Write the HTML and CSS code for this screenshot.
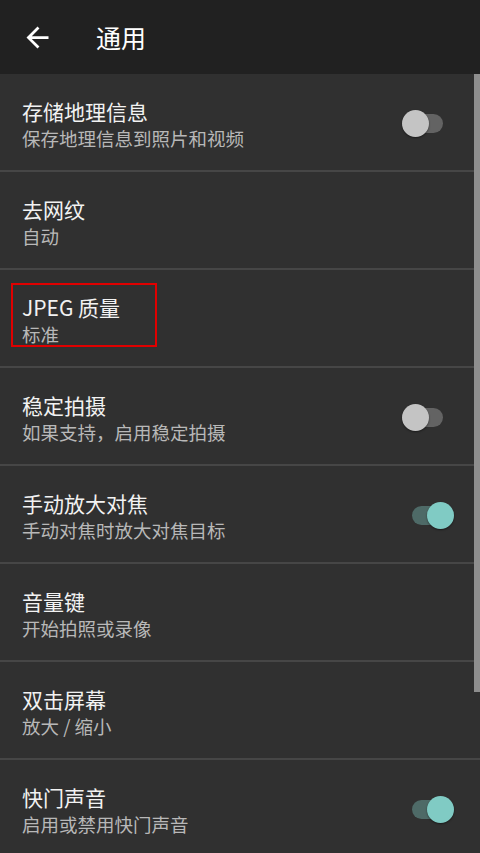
FILE: index.html
```html
<!DOCTYPE html>
<html lang="zh-CN">
<head>
<meta charset="utf-8">
<title>通用</title>
<link rel="stylesheet" href="styles.css">
</head>
<body>
<div class="screen">
  <header class="appbar">
    <svg class="back" viewBox="0 0 24 24" width="33" height="33"><path d="M20 11H7.83l5.59-5.59L12 4l-8 8 8 8 1.41-1.41L7.83 13H20v-2z" fill="#ffffff"/></svg>
    <h1 class="appbar-title">通用</h1>
  </header>
  <main class="list">
    <div class="row">
      <div class="text"><div class="title">存储地理信息</div><div class="summary">保存地理信息到照片和视频</div></div>
      <div class="switch off"><span class="track"></span><span class="thumb"></span></div>
    </div>
    <div class="row">
      <div class="text"><div class="title">去网纹</div><div class="summary">自动</div></div>
    </div>
    <div class="row">
      <div class="text"><div class="title">JPEG 质量</div><div class="summary">标准</div></div>
      <span class="highlight"></span>
    </div>
    <div class="row">
      <div class="text"><div class="title">稳定拍摄</div><div class="summary">如果支持，启用稳定拍摄</div></div>
      <div class="switch off"><span class="track"></span><span class="thumb"></span></div>
    </div>
    <div class="row">
      <div class="text"><div class="title">手动放大对焦</div><div class="summary">手动对焦时放大对焦目标</div></div>
      <div class="switch on"><span class="track"></span><span class="thumb"></span></div>
    </div>
    <div class="row">
      <div class="text"><div class="title">音量键</div><div class="summary">开始拍照或录像</div></div>
    </div>
    <div class="row">
      <div class="text"><div class="title">双击屏幕</div><div class="summary">放大 / 缩小</div></div>
    </div>
    <div class="row">
      <div class="text"><div class="title">快门声音</div><div class="summary">启用或禁用快门声音</div></div>
      <div class="switch on"><span class="track"></span><span class="thumb"></span></div>
    </div>
    <span class="scrollbar"></span>
  </main>
</div>
</body>
</html>
```
FILE: styles.css
```css
html, body {
  margin: 0;
  padding: 0;
  background: #303030;
}
body {
  font-family: "Noto Sans CJK SC", "Noto Sans", Roboto, sans-serif;
  color: #ffffff;
}
.screen {
  width: 480px;
  height: 853px;
  overflow: hidden;
  display: flex;
  flex-direction: column;
}
.appbar {
  height: 74px;
  flex: none;
  background: #212121;
  display: flex;
  align-items: center;
  padding-left: 21px;
}
.back {
  display: block;
  margin-top: 1px;
}
.appbar-title {
  margin: 0 0 0 42px;
  font-size: 25px;
  font-weight: 400;
  line-height: 30px;
  color: #ffffff;
}
.list {
  position: relative;
  flex: 1;
}
.row {
  position: relative;
  height: 96px;
  border-bottom: 2px solid #464646;
  display: flex;
  align-items: flex-start;
  padding: 24px 26px 0 22px;
  box-sizing: content-box;
}
.row { height: 72px; }
.text {
  flex: 1;
}
.title {
  font-size: 21px;
  line-height: 27px;
  color: #f2f2f2;
}
.summary {
  font-size: 18.5px;
  line-height: 27px;
  color: #b8b8b8;
}
.switch {
  position: relative;
  width: 52px;
  height: 27px;
  margin-top: 12px;
  flex: none;
}
.track {
  position: absolute;
  left: 10px;
  top: 4px;
  width: 31px;
  height: 19px;
  border-radius: 10px;
}
.thumb {
  position: absolute;
  top: 0;
  width: 27px;
  height: 27px;
  border-radius: 50%;
  box-shadow: 0 1px 2px rgba(0, 0, 0, 0.45);
}
.off .track { background: #636363; }
.off .thumb { left: 0; background: #c4c4c4; }
.on .track { background: #4e6a67; }
.on .thumb { right: 0; background: #80cbc4; }
.highlight {
  position: absolute;
  left: 11px;
  top: 13px;
  width: 142px;
  height: 60px;
  border: 2px solid #e00000;
}
.scrollbar {
  position: absolute;
  right: 0;
  top: 0;
  width: 6px;
  height: 618px;
  background: #8e8e8e;
}
```
